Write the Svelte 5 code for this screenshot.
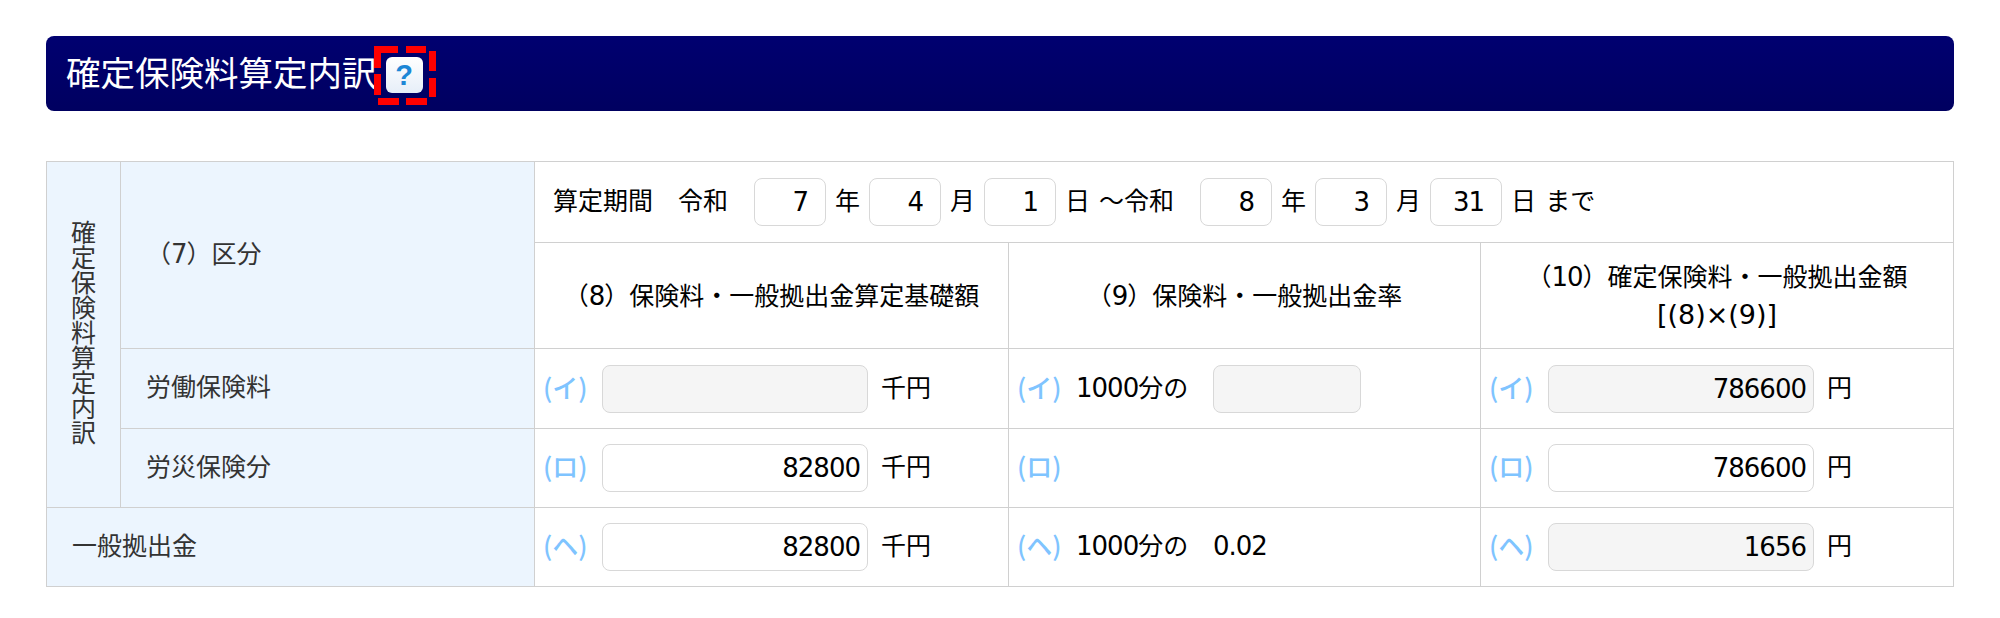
<script>
  const periodFields = [
    { value: '7', unit: '年' },
    { value: '4', unit: '月' },
    { value: '1', unit: '日' }
  ];
  const periodFieldsEnd = [
    { value: '8', unit: '年' },
    { value: '3', unit: '月' },
    { value: '31', unit: '日' }
  ];
</script>

<div class="page">
  <h2 class="title">
    <span>確定保険料算定内訳</span>
    <button class="help" type="button">
      ?
      <svg class="dash" width="62" height="59" viewBox="0 0 62 59" aria-hidden="true">
        <path d="M0 0h24v7H7v15H0zM32 0h20v7H32zM55 5h7v20h-7zM55 32h7v19h-7zM4 52h21v7H4zM32 52h21v7H32zM0 28h7v21H0z" fill="#ff0000" />
      </svg>
    </button>
  </h2>

  <table>
    <colgroup>
      <col class="c1" />
      <col class="c2" />
      <col class="c3" />
      <col class="c4" />
      <col />
    </colgroup>
    <tbody>
      <tr class="r1">
        <th rowspan="4" class="vertical"><span>確定保険料算定内訳</span></th>
        <th rowspan="2">（<span class="num">7</span>）区分</th>
        <td colspan="3" class="period">
          <div class="line">
            <span class="lead">算定期間　令和</span>
            {#each periodFields as f}
              <input class="small" value={f.value} />
              <span>{f.unit}</span>
            {/each}
            <span class="lead">～令和</span>
            {#each periodFieldsEnd as f}
              <input class="small" value={f.value} />
              <span>{f.unit}</span>
            {/each}
            <span>まで</span>
          </div>
        </td>
      </tr>
      <tr class="r2">
        <td class="head">（<span class="num">8</span>）保険料・一般拠出金算定基礎額</td>
        <td class="head">（<span class="num">9</span>）保険料・一般拠出金率</td>
        <td class="head">（<span class="num">10</span>）確定保険料・一般拠出金額<br /><span class="num formula">[(8)×(9)]</span></td>
      </tr>
      <tr class="r3">
        <th>労働保険料</th>
        <td><div class="line"><span class="mark">(イ)</span><input class="wide" disabled value="" /><span>千円</span></div></td>
        <td><div class="line"><span class="mark">(イ)</span><span class="rate"><span class="num">1000</span>分の</span><input class="rate-input" disabled value="" /></div></td>
        <td><div class="line"><span class="mark">(イ)</span><input class="wide" disabled value="786600" /><span>円</span></div></td>
      </tr>
      <tr class="r4">
        <th>労災保険分</th>
        <td><div class="line"><span class="mark">(ロ)</span><input class="wide" value="82800" /><span>千円</span></div></td>
        <td><div class="line"><span class="mark">(ロ)</span></div></td>
        <td><div class="line"><span class="mark">(ロ)</span><input class="wide" value="786600" /><span>円</span></div></td>
      </tr>
      <tr class="r5">
        <th colspan="2">一般拠出金</th>
        <td><div class="line"><span class="mark">(ヘ)</span><input class="wide" value="82800" /><span>千円</span></div></td>
        <td><div class="line"><span class="mark">(ヘ)</span><span class="rate"><span class="num">1000</span>分の</span><span><span class="num">0.02</span></span></div></td>
        <td><div class="line"><span class="mark">(ヘ)</span><input class="wide" disabled value="1656" /><span>円</span></div></td>
      </tr>
    </tbody>
  </table>
</div>

<style>
  :global(body) {
    margin: 0;
    background: #fff;
  }

  .page {
    padding: 36px 46px 0;
    font-family: "Noto Sans CJK JP", "Noto Sans", sans-serif;
    font-size: 25px;
    color: #000;
  }

  .title {
    display: flex;
    align-items: center;
    height: 75px;
    margin: 0 0 50px;
    padding: 0 0 4px 20px;
    box-sizing: border-box;
    background: linear-gradient(#000070, #000060);
    border-radius: 8px;
    color: #fff;
    font-size: 34.5px;
    font-weight: 400;
    line-height: 1;
  }

  .help {
    position: relative;
    width: 37px;
    height: 36px;
    margin: 6px 0 0 9px;
    padding: 0;
    border: 0;
    border-radius: 6px;
    background: linear-gradient(#ffffff, #e6eef8);
    color: #1d87d6;
    font-family: "Liberation Sans", sans-serif;
    font-size: 29px;
    font-weight: 700;
    line-height: 36px;
  }

  .dash {
    position: absolute;
    left: -12px;
    top: -11px;
  }

  table {
    width: 1908px;
    border-collapse: collapse;
    table-layout: fixed;
  }

  .c1 { width: 74px; }
  .c2 { width: 414px; }
  .c3 { width: 474px; }
  .c4 { width: 472px; }

  th, td {
    padding: 0;
    border: 1.5px solid #d0d0d0;
    line-height: 38px;
  }

  th {
    padding: 0 0 7px 25px;
    background: #ecf5fe;
    color: #333;
    font-weight: 400;
    text-align: left;
  }

  .vertical {
    padding: 0 0 6px;
    text-align: center;
  }

  .vertical span {
    display: block;
    width: 25px;
    margin: 0 auto;
    line-height: 25px;
  }

  .r1 { height: 81px; }
  .r2 { height: 106px; }
  .r3 { height: 80px; }
  .r4 { height: 79px; }
  .r5 { height: 79px; }

  .period { padding-left: 18px; }

  .head {
    padding-bottom: 3px;
    text-align: center;
  }

  .line {
    display: flex;
    align-items: center;
    gap: 9px;
  }

  .line > span { padding-bottom: 6px; }

  td > .line { min-height: 48px; }

  td:not(.period):not(.head) > .line { padding-left: 8px; }

  .line > .lead { margin-right: 17px; }

  .num {
    font-family: "DejaVu Sans", sans-serif;
    font-size: 26px;
    letter-spacing: -1px;
    line-height: 1;
  }

  .formula {
    font-size: 27px;
    letter-spacing: 0;
  }

  .line > .mark {
    width: 42px;
    margin-right: 8px;
    padding-bottom: 4px;
    color: #7fc4ff;
    font-weight: 500;
    font-size: 26px;
    white-space: nowrap;
  }

  .rate { width: 128px; }

  input {
    box-sizing: border-box;
    height: 48px;
    padding: 0 7px 0 0;
    border: 1.5px solid #d8d8d8;
    border-radius: 8px;
    background: #fff;
    color: #000;
    font-family: "DejaVu Sans", sans-serif;
    font-size: 26px;
    letter-spacing: -1px;
    text-align: right;
  }

  input:disabled { background: #f5f5f5; }

  .small { width: 72px; padding-right: 17px; }
  .wide { width: 266px; margin-right: 4px; }
  .rate-input { width: 148px; }
</style>
